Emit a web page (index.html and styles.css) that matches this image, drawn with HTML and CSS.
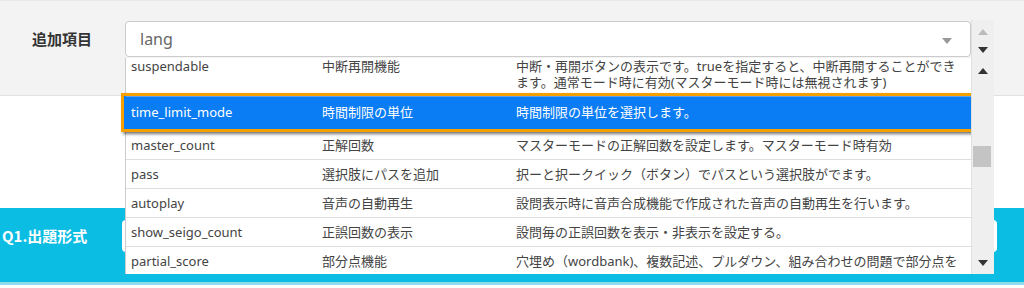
FILE: index.html
```html
<!DOCTYPE html>
<html lang="ja">
<head>
  <meta charset="UTF-8">
  <title>追加項目</title>
  <link rel="stylesheet" href="styles.css">
</head>
<body>
  <div class="panel-top">
    <label class="field-label">追加項目</label>
    <div class="combo">
      <div class="combo-box">
        <span class="combo-value">lang</span>
        <span class="caret"></span>
      </div>

      <div class="dropdown">
        <div class="dropdown-inner">
          <div class="opt">
            <div class="c-key">suspendable</div>
            <div class="c-name">中断再開機能</div>
            <div class="c-desc">中断・再開ボタンの表示です。trueを指定すると、中断再開することができます。通常モード時に有効(マスターモード時には無視されます)</div>
          </div>
          <div class="opt-placeholder"></div>
          <div class="opt">
            <div class="c-key">master_count</div>
            <div class="c-name">正解回数</div>
            <div class="c-desc">マスターモードの正解回数を設定します。マスターモード時有効</div>
          </div>
          <div class="opt">
            <div class="c-key">pass</div>
            <div class="c-name">選択肢にパスを追加</div>
            <div class="c-desc">択ーと択ークイック（ボタン）でパスという選択肢がでます。</div>
          </div>
          <div class="opt">
            <div class="c-key">autoplay</div>
            <div class="c-name">音声の自動再生</div>
            <div class="c-desc">設問表示時に音声合成機能で作成された音声の自動再生を行います。</div>
          </div>
          <div class="opt">
            <div class="c-key">show_seigo_count</div>
            <div class="c-name">正誤回数の表示</div>
            <div class="c-desc">設問毎の正誤回数を表示・非表示を設定する。</div>
          </div>
          <div class="opt">
            <div class="c-key">partial_score</div>
            <div class="c-name">部分点機能</div>
            <div class="c-desc">穴埋め（wordbank)、複数記述、プルダウン、組み合わせの問題で部分点を</div>
          </div>
        </div>
      </div>

      <!-- row being dragged -->
      <div class="dragging">
        <div class="opt opt-active">
          <div class="c-key">time_limit_mode</div>
          <div class="c-name">時間制限の単位</div>
          <div class="c-desc">時間制限の単位を選択します。</div>
        </div>
      </div>

      <div class="scroll-col">
        <span class="arrow up dim spin-up"></span>
        <span class="arrow down spin-down"></span>
        <span class="arrow up bar-up"></span>
        <span class="thumb"></span>
        <span class="arrow down bar-down"></span>
      </div>
    </div>
  </div>

  <div class="panel-mid"></div>

  <div class="panel-q">
    <div class="q-title">Q1.出題形式</div>
    <div class="q-input"></div>
  </div>
</body>
</html>
```

FILE: styles.css
```css
body {
  margin: 0;
  font-family: "Noto Sans", "Noto Sans CJK JP", sans-serif;
  color: #444;
  background: #fff;
  overflow: hidden;
}

.panel-top {
  display: flex;
  align-items: flex-start;
  height: 74px;
  padding: 20px 0 0 0;
  background: #f3f3f3;
  border-top: 1px solid #e8e8e8;
  border-bottom: 1px solid #e2e2e2;
}

.field-label {
  width: 93px;
  padding-left: 32px;
  line-height: 36px;
  font-size: 15px;
  font-weight: bold;
  color: #333;
  font-family: "Noto Sans CJK JP", sans-serif;
}

.combo {
  position: relative;
  width: 846px;
}

.combo-box {
  display: flex;
  align-items: center;
  justify-content: space-between;
  box-sizing: border-box;
  height: 36px;
  padding: 0 18px 0 14px;
  background: #fff;
  border: 1px solid #ccc;
  border-radius: 4px;
}

.combo-value {
  font-size: 16px;
  color: #666;
}

.caret {
  margin-top: 4px;
  border-left: 5px solid transparent;
  border-right: 5px solid transparent;
  border-top: 6px solid #999;
}

/* dropdown list */
.dropdown {
  position: absolute;
  top: 37px;
  left: 0;
  width: 846px;
  height: 216px;
  box-sizing: border-box;
  overflow: hidden;
  background: #fff;
  border-left: 1px solid #ccc;
}

.dropdown-inner {
  margin-top: -6px;
}

.opt {
  display: flex;
  font-size: 13px;
  line-height: 16px;
  border-bottom: 1px solid #ddd;
}

.opt > div {
  box-sizing: border-box;
  padding: 6px 5px;
}

.c-key { width: 191px; flex: none; }
.c-name { width: 194px; flex: none; }
.c-desc { flex: 1; padding-right: 8px !important; }

.opt-placeholder {
  height: 34px;
}

.dragging {
  position: absolute;
  top: 72px;
  left: -4px;
  width: 853px;
  height: 39px;
  box-sizing: border-box;
  padding-left: 2px;
  background: #0a7cf4;
  border: 3px solid #f5a000;
  box-shadow: 2px 2px 3px rgba(0, 0, 0, 0.55);
}

.opt-active {
  color: #fff;
  border-bottom: none;
  border-top: 1px solid #5aa6f6;
  padding-top: 1px;
}

/* spinner + scrollbar column */
.scroll-col {
  position: absolute;
  top: -1px;
  left: 846px;
  width: 22px;
  height: 254px;
  background: #efefef;
  border-left: 1px solid #e0e0e0;
}

.arrow {
  position: absolute;
  left: 6px;
  border-left: 5px solid transparent;
  border-right: 5px solid transparent;
}

.arrow.up { border-bottom: 6px solid #333; }
.arrow.down { border-top: 6px solid #333; }
.arrow.dim { border-bottom-color: #bbb; }

.spin-up { top: 9px; }
.spin-down { top: 27px; }
.bar-up { top: 48px; }
.bar-down { top: 240px; }

.thumb {
  position: absolute;
  top: 126px;
  left: 1px;
  width: 18px;
  height: 21px;
  background: #c4c4c4;
}

.panel-mid {
  height: 112px;
  background: #fff;
}

.panel-q {
  display: flex;
  align-items: flex-start;
  height: 62px;
  padding-top: 12px;
  background: #0bbde3;
  border-bottom: 3px solid #8fdcef;
}

.q-title {
  width: 120px;
  padding-left: 2px;
  line-height: 32px;
  font-size: 15px;
  font-weight: bold;
  color: #fff;
  font-family: "Noto Sans CJK JP", sans-serif;
}

.q-input {
  width: 875px;
  height: 32px;
  background: #fff;
  border-radius: 4px;
}
```
